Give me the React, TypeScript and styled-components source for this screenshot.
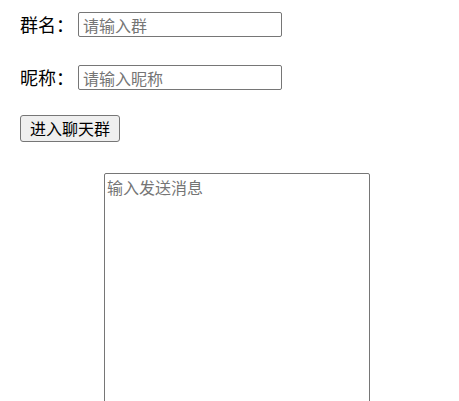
import styled, { createGlobalStyle } from 'styled-components';

const GlobalStyle = createGlobalStyle`
  body {
    margin: 0;
    background: #ffffff;
    font-family: "Noto Sans CJK SC", "Noto Sans", sans-serif;
    color: #000000;
  }
`;

const Page = styled.div`
  display: flex;
  flex-direction: column;
  align-items: flex-start;
  padding: 12px 0 0 20px;
`;

const FieldRow = styled.div<{ $spaceAfter: number }>`
  display: flex;
  align-items: center;
  gap: 4px;
  height: 25px;
  margin-bottom: ${({ $spaceAfter }) => $spaceAfter}px;
`;

const Label = styled.label`
  font-size: 18px;
  line-height: 25px;
  white-space: nowrap;
`;

const TextInput = styled.input`
  box-sizing: border-box;
  width: 204px;
  height: 25px;
  padding: 0 4px;
  border: 1px solid #767676;
  border-radius: 2px;
  font-family: inherit;
  font-size: 16px;
  color: #000000;
  outline: none;

  &::placeholder {
    color: #757575;
  }
`;

const EnterButton = styled.button`
  box-sizing: border-box;
  height: 27px;
  padding: 0 9px;
  border: 1px solid #767676;
  border-radius: 3px;
  background: #efefef;
  font-family: inherit;
  font-size: 16px;
  line-height: 25px;
  color: #000000;
  cursor: pointer;
`;

const MessageBox = styled.textarea`
  box-sizing: border-box;
  width: 266px;
  height: 260px;
  margin: 31px 0 0 84px;
  padding: 2px 2px;
  border: 1px solid #767676;
  border-radius: 2px;
  font-family: inherit;
  font-size: 16px;
  line-height: 22px;
  resize: none;
  outline: none;

  &::placeholder {
    color: #757575;
  }
`;

export default function App() {
  return (
    <>
      <GlobalStyle />
      <Page>
        <FieldRow $spaceAfter={28}>
          <Label htmlFor="group">群名：</Label>
          <TextInput id="group" placeholder="请输入群" />
        </FieldRow>
        <FieldRow $spaceAfter={25}>
          <Label htmlFor="nick">昵称：</Label>
          <TextInput id="nick" placeholder="请输入昵称" />
        </FieldRow>
        <EnterButton type="button">进入聊天群</EnterButton>
        <MessageBox placeholder="输入发送消息" />
      </Page>
    </>
  );
}
